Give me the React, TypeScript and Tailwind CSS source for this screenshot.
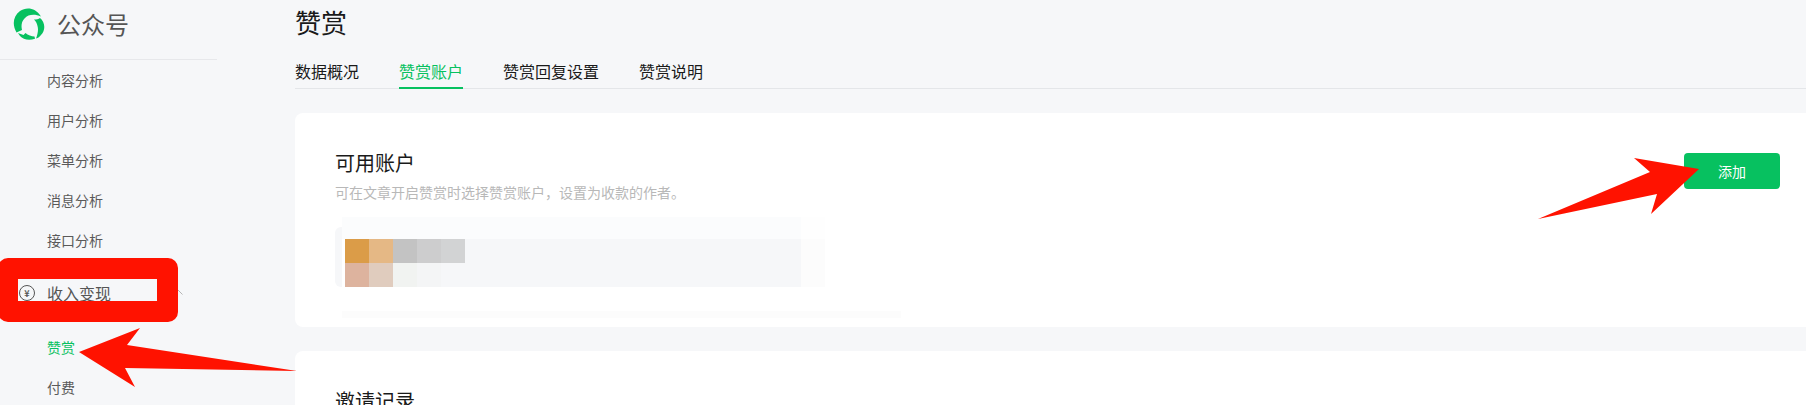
import React from 'react';

const CJK = "font-['Noto_Sans_CJK_SC','Liberation_Sans',sans-serif]";

const analysisItems = ['内容分析', '用户分析', '菜单分析', '消息分析', '接口分析'];

const tabs = [
  { label: '数据概况', active: false },
  { label: '赞赏账户', active: true },
  { label: '赞赏回复设置', active: false },
  { label: '赞赏说明', active: false },
];

const mosaic = [
  'bg-[#db9c48]',
  'bg-[#e5b885]',
  'bg-[#c3c3c3]',
  'bg-[#cdcdce]',
  'bg-[#d2d3d4]',
  'bg-[#ddb39e]',
  'bg-[#e0ccbe]',
  'bg-[#f1f3f1]',
  'bg-[#f4f5f6]',
  'bg-[#f6f7f9]',
];

const Logo = () => (
  <svg width="32" height="32" viewBox="0 0 32 32" className="shrink-0">
    <g fill="#07c160">
      <path d="M3.5 24.5C-1 17 0 8 7 3C13 -1 22 -1 28 8.5C22 6 15.5 6 11.5 10.5C8.5 13.5 8 18 9 22Z" />
      <path d="M21 11.5C23.5 11.5 25.5 11 27 10C32 14 33 22 28 27C27 28.5 25 30 23 30.5C25 26 25.5 21 24.5 18C24 15.5 23 13.5 21 11.5Z" />
      <path d="M5 25L10.5 27L12.5 25C15 27.5 18.5 28.2 21.5 28.5L22 30.7C16 33 10 31.5 7 28Z" />
    </g>
  </svg>
);

const Sidebar = () => (
  <aside className="w-[217px] shrink-0 text-[14px] text-[#5a5a5a]">
    <div className="flex h-[60px] items-start border-b border-[#e7e8eb] pl-[13px] pt-[8px]">
      <Logo />
      <span className="ml-[12px] text-[24px] leading-[32px] text-[#555555]">公众号</span>
    </div>
    <ul>
      {analysisItems.map((item) => (
        <li key={item} className="flex h-[40px] items-center pl-[47px]">
          {item}
        </li>
      ))}
    </ul>
    <div className="mt-[13px] flex h-[40px] items-center pl-[19px] pr-[34px]">
      <span className="flex h-[16px] w-[16px] items-center justify-center rounded-full border border-[#555555] text-[9px] font-bold leading-none">
        ¥
      </span>
      <span className="ml-[12px] text-[16px] text-[#555555]">收入变现</span>
      <svg width="12" height="7" viewBox="0 0 12 7" className="ml-auto -translate-y-[2px]">
        <path d="M0.5 6.5L6 1L11.5 6.5" fill="none" stroke="#b5b5b5" strokeWidth="1" />
      </svg>
    </div>
    <div className="mt-[14px] flex h-[40px] items-center pl-[47px] text-[#07c160]">赞赏</div>
    <div className="flex h-[40px] items-center pl-[47px]">付费</div>
  </aside>
);

const AccountMosaic = () => (
  <div className="mt-[15px]">
    <div className="ml-[7px] flex h-[22px]">
      <div className="w-[459px] bg-[#fbfcfd]" />
      <div className="w-[24px] bg-[#fefefe]" />
    </div>
    <div className="flex h-[48px]">
      <div className="-mt-[12px] h-[60px] w-[7px] rounded-l-md bg-[#f6f7f9]" />
      <div className="ml-[3px] w-[456px] bg-[#f6f7f9]">
        <div className="grid w-[120px] grid-cols-5">
          {mosaic.map((c, i) => (
            <div key={i} className={`h-[24px] ${c}`} />
          ))}
        </div>
      </div>
      <div className="w-[24px] bg-[#fcfcfc]" />
    </div>
    <div className="ml-[7px] mt-[24px] h-[7px] w-[559px] bg-[#fcfcfc]" />
  </div>
);

export default function App() {
  return (
    <div className={`relative flex h-[405px] w-[1806px] overflow-hidden bg-[#f6f7f9] ${CJK}`}>
      <Sidebar />

      <main className="ml-[78px] w-[1525px] shrink-0">
        <h1 className="h-[44px] text-[26px] font-normal leading-[44px] text-[#1a1a1a]">赞赏</h1>

        <div className="mt-[11px] flex h-[34px] gap-[40px] border-b border-[#e4e6e9] text-[16px]">
          {tabs.map((tab) => (
            <div
              key={tab.label}
              className={
                tab.active
                  ? 'h-[34px] border-b-2 border-[#07c160] leading-[32px] text-[#07c160]'
                  : 'h-[34px] leading-[32px] text-[#1a1a1a]'
              }
            >
              {tab.label}
            </div>
          ))}
        </div>

        <section className="mt-[24px] flex h-[214px] items-start justify-between rounded-lg bg-white pl-[40px] pr-[40px] pt-[36px]">
          <div>
            <h2 className="text-[20px] font-normal leading-[28px] text-[#1a1a1a]">可用账户</h2>
            <p className="mt-[5px] text-[14px] leading-[20px] text-[#b8b8b8]">
              可在文章开启赞赏时选择赞赏账户，设置为收款的作者。
            </p>
            <AccountMosaic />
          </div>
          <button className="mt-[4px] h-[36px] w-[96px] rounded bg-[#07c160] text-[14px] text-white">添加</button>
        </section>

        <section className="mt-[24px] h-[200px] rounded-lg bg-white pl-[40px] pt-[36px]">
          <h2 className="text-[20px] font-normal leading-[28px] text-[#1a1a1a]">邀请记录</h2>
        </section>
      </main>

      {/* annotations drawn over the screenshot */}
      <div className="absolute left-[-2px] top-[258px] box-border h-[64px] w-[180px] rounded-[10px] border-y-[21px] border-l-[20px] border-r-[21px] border-[#ff1200]" />
      <svg width="1806" height="405" className="pointer-events-none absolute left-0 top-0">
        <polygon fill="#ff1200" points="79,352 140,328 127,345 297,371 125,368 135,387" />
        <polygon fill="#ff1200" points="1699,169 1634,158 1650,172 1538,219 1657,194 1651,214" />
      </svg>
    </div>
  );
}
